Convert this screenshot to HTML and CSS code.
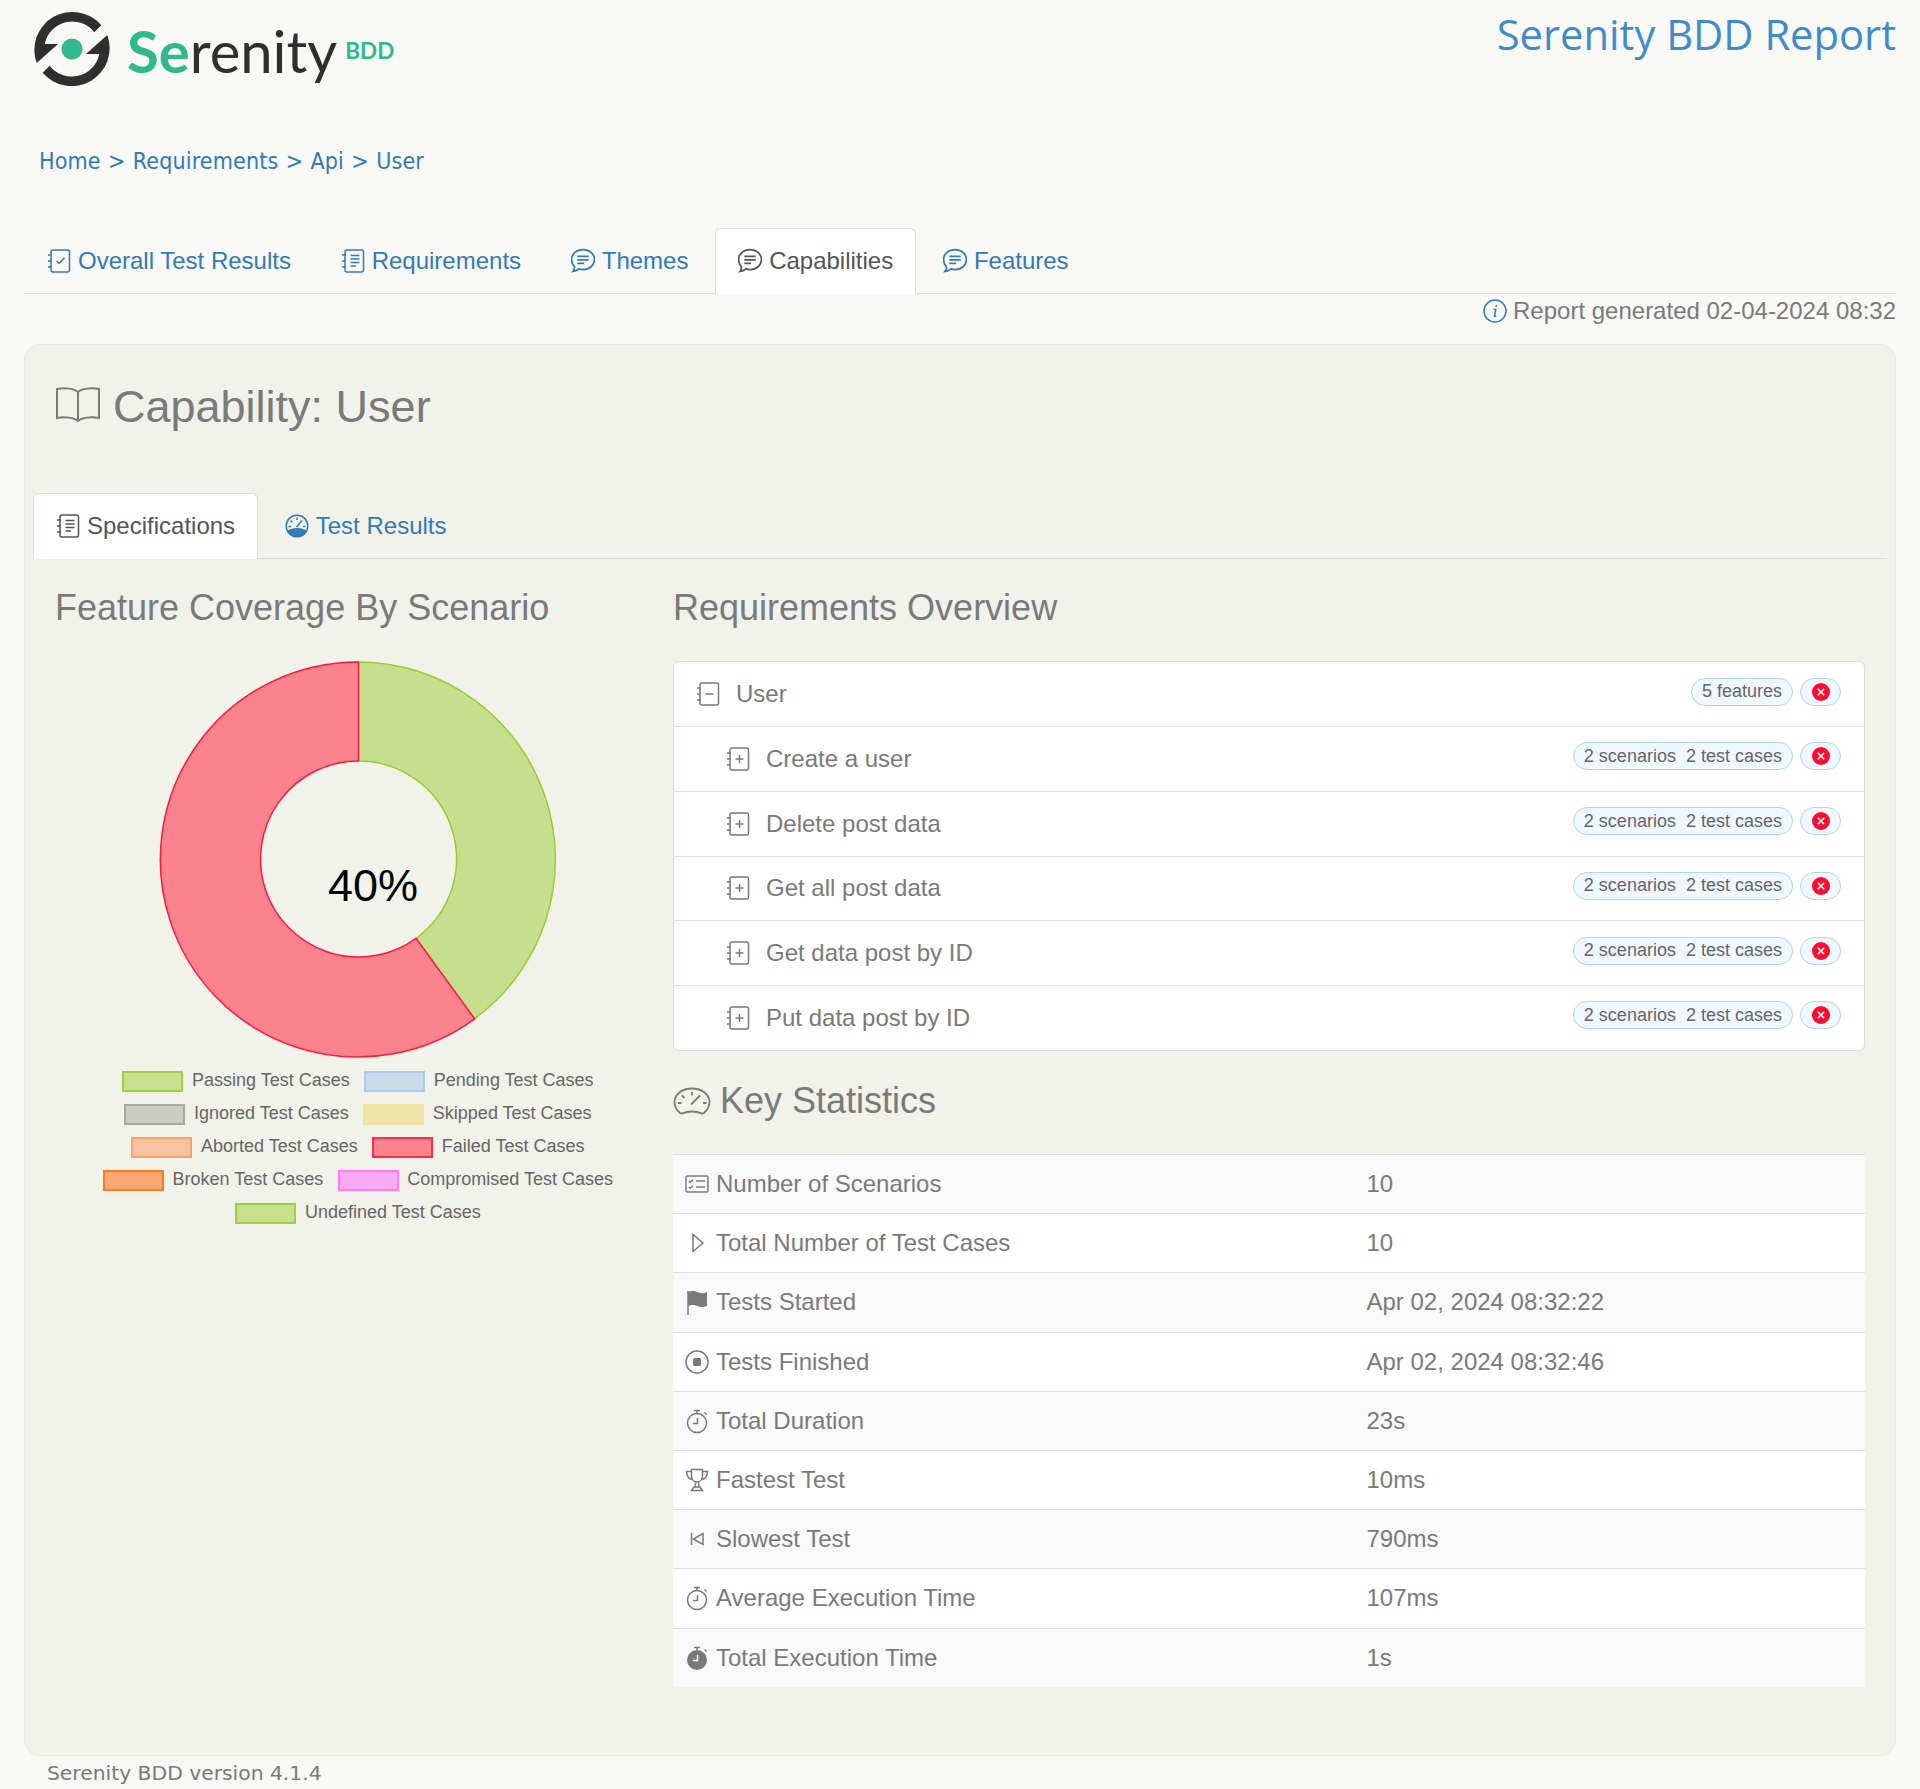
FILE: index.html
```html
<!DOCTYPE html>
<html lang="en">
<head>
<meta charset="utf-8">
<title>Serenity BDD Report</title>
<link rel="stylesheet" href="styles.css">
</head>
<body>
<svg class="defs" aria-hidden="true">
  <symbol id="i-check" viewBox="0 0 24 24"><rect x="4" y="1" width="18.500" height="22" rx="2"/><path d="M1 6h4M1 12h4M1 18h4M9.500 12l2.500 2.500 5.500-5.500"/></symbol>
  <symbol id="i-list" viewBox="0 0 24 24"><rect x="4" y="1" width="18.500" height="22" rx="2"/><path d="M1 6h4M1 12h4M1 18h4M9.500 6.500h9M9.500 10h9M9.500 13.500h9M9.500 17h5.500"/></symbol>
  <symbol id="i-plus" viewBox="0 0 24 24"><rect x="4" y="1" width="18.500" height="22" rx="2"/><path d="M1 6h4M1 12h4M1 18h4M9.500 12h8M13.500 8v8"/></symbol>
  <symbol id="i-minus" viewBox="0 0 24 24"><rect x="4" y="1" width="18.500" height="22" rx="2"/><path d="M1 6h4M1 12h4M1 18h4M9.500 12h8"/></symbol>
  <symbol id="i-chat" viewBox="1.500 2 21 21"><path d="M12 2.500c5.500 0 10 3.800 10 8.800s-4.500 8.700-10 8.700c-1.300 0-2.500-.2-3.600-.6-1 .9-2.800 2-5.200 2.300.8-1.100 1.300-2.400 1.400-3.900C2.900 16 2 13.800 2 11.300 2 6.300 6.500 2.500 12 2.500z"/><path d="M7 8.500h10M7 11.500h10M7 14.500h6"/></symbol>
  <symbol id="i-info" viewBox="0 0 24 24"><circle cx="12" cy="12" r="11"/><path d="M10.500 10.500h2.300l-1.300 6.500c-.1.600.6.700 1.800-.1"/><circle class="solid" cx="13.200" cy="7" r="1.100"/></symbol>
  <symbol id="i-book" viewBox="0 0 46 36"><path d="M23 6C19 2.500 10 1.500 2 3v29c8-1.500 17-.5 21 3 4-3.500 13-4.500 21-3V3c-8-1.500-17-.5-21 3zM23 6v29"/></symbol>
  <symbol id="i-gauge" viewBox="0 0 24 24"><circle cx="12" cy="12" r="10.800"/><path class="solid" d="M2.500 16.500c5-3.500 14-3.500 19 0-1.800 3.800-5.300 6.300-9.500 6.300s-7.700-2.500-9.500-6.300z"/><path d="M12 3.500v2.500M5.500 6.500l1.800 1.800M3.500 12.500h2.500M18 12.500h2.500M11.500 13L17 6.500"/></symbol>
  <symbol id="i-speed" viewBox="0 0 38 28"><path d="M7 26C3.500 23 1.500 19.500 1.500 15 1.500 7.500 9 1.500 19 1.500S36.500 7.500 36.500 15c0 4.500-2 8-5.500 11-.8.6-1.800.6-2.500.3-3-1.300-6-1.800-9.500-1.800s-6.500.5-9.500 1.800c-.7.3-1.700.3-2.500-.3z"/><path d="M19 5v3.500M9 8.500l2.500 2.500M5 16h3.500M30 16h3.500M18 17.500l9-9"/></symbol>
  <symbol id="i-card" viewBox="0 0 24 24"><rect x="1" y="4" width="22" height="16" rx="1.500"/><path d="M11 9h9M11 15h9M4 9l1.300 1.300L8 7.800M4 15l1.300 1.300L8 13.800"/></symbol>
  <symbol id="i-play" viewBox="0 0 24 24"><path d="M8 3.500l10 8.500-10 8.500z"/></symbol>
  <symbol id="i-flag" viewBox="0 0 24 24"><path d="M3 1v24"/><path class="solid" d="M3 2c3-1.500 7-1 10 .3 3 1.300 5.500 1.300 9-.3v14c-3.500 1.500-6 1.500-9 .2-3-1.500-7-2-10 0z"/></symbol>
  <symbol id="i-stop" viewBox="0 0 24 24"><circle cx="12" cy="12" r="11"/><rect class="solid" x="8" y="8" width="8" height="8" rx="1.500"/></symbol>
  <symbol id="i-watch" viewBox="0 0 24 24"><circle cx="12" cy="14" r="9.500"/><path d="M9 1.500h6M12 1.500v3M19.500 3.500l2 2M12.500 9v5.500H8"/></symbol>
  <symbol id="i-watch-fill" viewBox="0 0 24 24"><circle class="solid" cx="12" cy="14" r="10"/><path d="M9 1.500h6M12 1.500v3M19.500 3.500l2 2"/><path class="hand" d="M12.500 9v5.500H8"/></symbol>
  <symbol id="i-trophy" viewBox="0 0 24 24"><path d="M6.500 1.500h11V8c0 3.500-2.300 6-5.500 6S6.500 11.500 6.500 8zM6.500 3.500H1.500c0 4.500 2.500 8 6.500 8M17.500 3.500h5c0 4.500-2.500 8-6.500 8M10.800 14l-.8 5M13.200 14l.8 5M9 19h6l2.500 3.500h-11z"/></symbol>
  <symbol id="i-skip" viewBox="0 0 24 24"><path d="M6.500 6v12M18 6.500l-9.500 5.500 9.500 5.500z"/></symbol>
</svg>

<header class="top">
  <div class="logo">
    <svg class="logo-mark" viewBox="0 0 78 78" aria-hidden="true">
      <path class="mark-dark" d="M68.300 15.300A38 38 0 0 0 3.700 53.100L25 34H11.700A28 28 0 0 1 61.300 22.300Z"/>
      <path class="mark-dark" d="M68.300 15.300A38 38 0 0 0 3.700 53.100L25 34H11.700A28 28 0 0 1 61.300 22.300Z" transform="rotate(180 39 39)"/>
      <circle class="mark-dot" cx="39" cy="39" r="10.500"/>
    </svg>
    <span class="logo-word"><span class="logo-green">Se</span>renity</span>
    <span class="logo-bdd">BDD</span>
  </div>
  <h1 class="report-title">Serenity BDD Report</h1>
</header>

<nav class="crumbs"><a>Home</a> &gt; <a>Requirements</a> &gt; <a>Api</a> &gt; <a>User</a></nav>

<ul class="tabs main-tabs">
  <li class="tab"><svg class="ico"><use href="#i-check"/></svg>Overall Test Results</li>
  <li class="tab"><svg class="ico"><use href="#i-list"/></svg>Requirements</li>
  <li class="tab"><svg class="ico"><use href="#i-chat"/></svg>Themes</li>
  <li class="tab active"><svg class="ico"><use href="#i-chat"/></svg>Capabilities</li>
  <li class="tab"><svg class="ico"><use href="#i-chat"/></svg>Features</li>
</ul>
<p class="generated"><svg class="ico info"><use href="#i-info"/></svg>Report generated 02-04-2024 08:32</p>

<main class="panel">
  <h2 class="cap-title"><svg class="ico book"><use href="#i-book"/></svg>Capability: User</h2>
  <ul class="tabs sub-tabs">
    <li class="tab active"><svg class="ico"><use href="#i-list"/></svg>Specifications</li>
    <li class="tab"><svg class="ico gauge"><use href="#i-gauge"/></svg>Test Results</li>
  </ul>
  <div class="columns">
    <section class="col-left">
      <h3 class="heading">Feature Coverage By Scenario</h3>
      <svg class="donut" viewBox="0 0 606 397" role="img" aria-label="Feature coverage donut chart">
        <path class="slice-pass" d="M303.500 1A197.500 197.500 0 0 1 419.600 357.800L361.100 277.300A98 98 0 0 0 303.500 100Z"/>
        <path class="slice-fail" d="M419.600 357.800A197.500 197.500 0 1 1 303.500 1V100A98 98 0 1 0 361.100 277.300Z"/>
        <text class="donut-label" x="318" y="240" text-anchor="middle">40%</text>
      </svg>
      <div class="legend">
        <div class="legend-row"><span class="key"><i class="box k-pass"></i>Passing Test Cases</span><span class="key"><i class="box k-pend"></i>Pending Test Cases</span></div>
        <div class="legend-row"><span class="key"><i class="box k-ign"></i>Ignored Test Cases</span><span class="key"><i class="box k-skip"></i>Skipped Test Cases</span></div>
        <div class="legend-row"><span class="key"><i class="box k-abort"></i>Aborted Test Cases</span><span class="key"><i class="box k-fail"></i>Failed Test Cases</span></div>
        <div class="legend-row"><span class="key"><i class="box k-broken"></i>Broken Test Cases</span><span class="key"><i class="box k-comp"></i>Compromised Test Cases</span></div>
        <div class="legend-row"><span class="key"><i class="box k-pass"></i>Undefined Test Cases</span></div>
      </div>
    </section>
    <section class="col-right">
      <h3 class="heading">Requirements Overview</h3>
      <div class="tree">
        <div class="tree-row root"><svg class="ico"><use href="#i-minus"/></svg><span class="tree-name">User</span><span class="pill">5 features</span><span class="pill status"><svg class="cross" viewBox="0 0 18 18"><circle cx="9" cy="9" r="9"/><path d="M5.800 5.800l6.400 6.400M12.200 5.800l-6.400 6.400"/></svg></span></div>
        <div class="tree-row"><svg class="ico"><use href="#i-plus"/></svg><span class="tree-name">Create a user</span><span class="pill">2 scenarios<span class="comma">,</span> 2 test cases</span><span class="pill status"><svg class="cross" viewBox="0 0 18 18"><circle cx="9" cy="9" r="9"/><path d="M5.800 5.800l6.400 6.400M12.200 5.800l-6.400 6.400"/></svg></span></div>
        <div class="tree-row"><svg class="ico"><use href="#i-plus"/></svg><span class="tree-name">Delete post data</span><span class="pill">2 scenarios<span class="comma">,</span> 2 test cases</span><span class="pill status"><svg class="cross" viewBox="0 0 18 18"><circle cx="9" cy="9" r="9"/><path d="M5.800 5.800l6.400 6.400M12.200 5.800l-6.400 6.400"/></svg></span></div>
        <div class="tree-row"><svg class="ico"><use href="#i-plus"/></svg><span class="tree-name">Get all post data</span><span class="pill">2 scenarios<span class="comma">,</span> 2 test cases</span><span class="pill status"><svg class="cross" viewBox="0 0 18 18"><circle cx="9" cy="9" r="9"/><path d="M5.800 5.800l6.400 6.400M12.200 5.800l-6.400 6.400"/></svg></span></div>
        <div class="tree-row"><svg class="ico"><use href="#i-plus"/></svg><span class="tree-name">Get data post by ID</span><span class="pill">2 scenarios<span class="comma">,</span> 2 test cases</span><span class="pill status"><svg class="cross" viewBox="0 0 18 18"><circle cx="9" cy="9" r="9"/><path d="M5.800 5.800l6.400 6.400M12.200 5.800l-6.400 6.400"/></svg></span></div>
        <div class="tree-row"><svg class="ico"><use href="#i-plus"/></svg><span class="tree-name">Put data post by ID</span><span class="pill">2 scenarios<span class="comma">,</span> 2 test cases</span><span class="pill status"><svg class="cross" viewBox="0 0 18 18"><circle cx="9" cy="9" r="9"/><path d="M5.800 5.800l6.400 6.400M12.200 5.800l-6.400 6.400"/></svg></span></div>
      </div>
      <h3 class="heading key-heading"><svg class="ico speed"><use href="#i-speed"/></svg>Key Statistics</h3>
      <div class="stats">
        <div class="stat"><span class="stat-label"><svg class="ico"><use href="#i-card"/></svg>Number of Scenarios</span><span>10</span></div>
        <div class="stat"><span class="stat-label"><svg class="ico"><use href="#i-play"/></svg>Total Number of Test Cases</span><span>10</span></div>
        <div class="stat"><span class="stat-label"><svg class="ico"><use href="#i-flag"/></svg>Tests Started</span><span>Apr 02, 2024 08:32:22</span></div>
        <div class="stat"><span class="stat-label"><svg class="ico"><use href="#i-stop"/></svg>Tests Finished</span><span>Apr 02, 2024 08:32:46</span></div>
        <div class="stat"><span class="stat-label"><svg class="ico"><use href="#i-watch"/></svg>Total Duration</span><span>23s</span></div>
        <div class="stat"><span class="stat-label"><svg class="ico"><use href="#i-trophy"/></svg>Fastest Test</span><span>10ms</span></div>
        <div class="stat"><span class="stat-label"><svg class="ico"><use href="#i-skip"/></svg>Slowest Test</span><span>790ms</span></div>
        <div class="stat"><span class="stat-label"><svg class="ico"><use href="#i-watch"/></svg>Average Execution Time</span><span>107ms</span></div>
        <div class="stat"><span class="stat-label"><svg class="ico"><use href="#i-watch-fill"/></svg>Total Execution Time</span><span>1s</span></div>
      </div>
    </section>
  </div>
</main>
<footer class="version">Serenity BDD version 4.1.4</footer>
</body>
</html>
```
FILE: styles.css
```css
* { box-sizing: border-box; }
html, body { margin: 0; padding: 0; }
body {
  background: #f8f8f4;
  font-family: "Liberation Sans", Arial, sans-serif;
  font-size: 24px;
  color: #7a7a7a;
  height: 1789px;
  overflow: hidden;
}
.defs { display: none; }
.ico { fill: none; stroke: currentColor; stroke-width: 1.5; }
.solid { fill: currentColor; stroke: none; }
.hand { stroke: #fff; }
.ico { width: 24px; height: 28px; flex: none; }

/* header */
.top { display: flex; justify-content: space-between; height: 146px; padding: 0 24px 0 33px; }
.logo { display: flex; align-items: flex-start; height: 100px; }
.logo-mark { width: 78px; height: 78px; margin-top: 10px; }
.mark-dark { fill: #2f2f2f; stroke: none; }
.mark-dot { fill: #31b98e; stroke: none; }
.logo-word {
  font-family: Lato, "Open Sans", sans-serif;
  font-size: 58px;
  line-height: 72px;
  margin: 15px 0 0 16px;
  color: #2f2f2f;
}
.logo-green { color: #31b98e; font-weight: 700; }
.logo-bdd {
  font-family: Lato, sans-serif;
  font-weight: 700;
  font-size: 22.5px;
  line-height: 32px;
  margin: 35px 0 0 8px;
  color: #31b98e;
}
.report-title {
  margin: 7px 0 0;
  font-family: "Open Sans", sans-serif;
  font-size: 41.7px;
  line-height: 54px;
  font-weight: 400;
  color: #428bca;
}
.crumbs {
  height: 82px;
  padding-left: 39px;
  font-family: "DejaVu Sans", sans-serif;
  font-stretch: condensed;
  font-size: 23px;
  letter-spacing: .15px;
  word-spacing: .6px;
  line-height: 30px;
  color: #337ab7;
}

/* tabs */
.tabs { display: flex; gap: 3.7px; list-style: none; margin: 0; padding: 0; border-bottom: 1px solid #ddd; height: 66px; }
.main-tabs { margin: 0 24px; }
.tab {
  display: flex;
  align-items: center;
  gap: 7px;
  height: 66px;
  padding: 0 22px;
  border: 1px solid transparent;
  border-radius: 6px 6px 0 0;
  color: #337ab7;
  white-space: nowrap;
}
.tab.active { background: #fff; border-color: #ddd; border-bottom: 0; padding-bottom: 1px; color: #555; }

.generated {
  display: flex;
  justify-content: flex-end;
  align-items: center;
  gap: 6px;
  height: 50px;
  margin: 0 24px;
  padding-bottom: 16px;
  line-height: 34px;
}
.info { color: #337ab7; width: 24px; height: 24px; }

/* panel */
.panel {
  margin: 0 24px;
  height: 1412px;
  background: #f1f2ea;
  border: 1px solid #e9e9e1;
  border-radius: 16px;
}
.cap-title {
  display: flex;
  align-items: center;
  gap: 12px;
  height: 50px;
  margin: 37px 0 61px;
  padding-left: 30px;
  font-size: 45px;
  line-height: 50px;
  font-weight: 400;
}
.book { width: 46px; height: 38px; margin-top: -6px; stroke-width: 2; }
.sub-tabs { margin: 0 8px 0 8px; }
.gauge { color: #337ab7; }
.columns { display: flex; gap: 12px; padding: 27px 0 0 30px; }
.col-left { width: 606px; flex: none; }
.col-right { width: 1192px; flex: none; }
.heading { margin: 0 0 31px; font-size: 36px; line-height: 44px; font-weight: 400; }

/* chart */
.donut { display: block; width: 606px; height: 397px; }
.slice-pass { fill: #c6df8e; stroke: #9acd32; stroke-width: 1.5; }
.slice-fail { fill: #fa838e; stroke: #ff1a3c; stroke-width: 1.5; }
.donut-label { font-size: 45px; fill: #000; stroke: none; }
.legend { margin-top: 6px; font-size: 18px; color: #666; }
.legend-row { display: flex; justify-content: center; align-items: center; gap: 14.5px; height: 33px; }
.key { display: flex; align-items: center; gap: 8.6px; white-space: nowrap; }
.box { display: block; width: 61px; height: 21px; margin-top: 1px; border: 2px solid; }
.k-pass { background: #c8e08f; border-color: #9dd03f; }
.k-pend { background: #c9dbe9; border-color: #aecbee; }
.k-ign { background: #cbcbc5; border-color: #a9a9a3; }
.k-skip { background: #eee4a8; border-color: #efe6a2; }
.k-abort { background: #f9c3a3; border-color: #fba26c; }
.k-fail { background: #fc828d; border-color: #ff2a45; }
.k-broken { background: #fba974; border-color: #ff7a20; }
.k-comp { background: #f8aaf3; border-color: #ff7aff; }

/* requirements tree */
.tree { background: #fff; border: 1px solid #ddd; border-radius: 6px; height: 390px; }
.tree-row {
  display: flex;
  align-items: center;
  gap: 7px;
  height: 64.75px;
  padding: 0 23px 0 52px;
  border-top: 1px solid #ddd;
}
.tree-row.root { height: 64px; padding-left: 22px; border-top: 0; }
.tree-name { flex: 1; margin-left: 9px; }
.pill {
  display: flex;
  align-items: center;
  height: 28px;
  margin-bottom: 5px;
  padding: 0 10px;
  background: #f0f8ff;
  border: 1px solid #add8e6;
  border-radius: 15px;
  font-size: 18px;
  color: #666;
  white-space: pre;
}
.comma { color: #fff; }
.status { width: 41px; padding: 0; justify-content: center; }
.cross { width: 18px; height: 18px; }
.cross circle { fill: #ff0a30; stroke: none; }
.cross path { stroke: #fff; stroke-width: 1.6; fill: none; }

/* statistics */
.key-heading { display: flex; align-items: center; gap: 9px; margin: 28px 0 31px; }
.speed { width: 38px; height: 28px; stroke-width: 1.8; }
.stat {
  display: grid;
  grid-template-columns: 693.500px 1fr;
  align-items: center;
  height: 59.2px;
  border-top: 1px solid #ddd;
  background: #fff;
}
.stat:nth-child(odd) { background: #f9f9f9; }
.stat-label { display: flex; align-items: center; gap: 7px; padding-left: 12px; }

.version {
  padding-left: 47px;
  font-family: "DejaVu Sans", sans-serif;
  font-size: 20.3px;
  line-height: 34px;
}
```
